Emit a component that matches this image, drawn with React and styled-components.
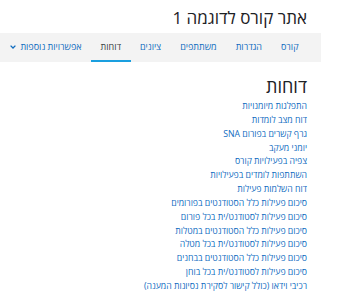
import React from 'react'
import styled, { createGlobalStyle } from 'styled-components'

const GlobalStyle = createGlobalStyle`
  body {
    margin: 0;
    background: #fff;
    font-family: 'Open Sans', 'Noto Sans', sans-serif;
  }
`

const tabs = [
  { name: 'קורס' },
  { name: 'הגדרות' },
  { name: 'משתתפים' },
  { name: 'ציונים' },
  { name: 'דוחות', active: true },
  { name: 'אפשרויות נוספות', more: true },
]

const reports = [
  'התפלגות מיומנויות',
  'דוח מצב לומדות',
  'גרף קשרים בפורום SNA',
  'יומני מעקב',
  'צפיה בפעילויות קורס',
  'השתתפות לומדים בפעילויות',
  'דוח השלמות פעילות',
  'סיכום פעילות כלל הסטודנטים בפורומים',
  'סיכום פעילות לסטודנט/ית בכל פורום',
  'סיכום פעילות כלל הסטודנטים במטלות',
  'סיכום פעילות לסטודנט/ית בכל מטלה',
  'סיכום פעילות כלל הסטודנטים בבחנים',
  'סיכום פעילות לסטודנט/ית בכל בוחן',
  'רכיבי וידאו (כולל קישור לסקירת נסיונות המענה)',
]

const App = () => {
  return (
    <Page>
      <GlobalStyle />
      <Title>אתר קורס לדוגמה 1</Title>
      <TabBar>
        {tabs.map(({ name, active, more }) => (
          <Tab key={name} $active={active}>
            {name}
            {more && (
              <svg width='6' height='4' viewBox='0 0 6 4'>
                <path d='M0.6 0.6 L3 3 L5.4 0.6' fill='none' stroke='#0f6cbf' strokeWidth='1.3' />
              </svg>
            )}
          </Tab>
        ))}
      </TabBar>
      <Content>
        <Heading>דוחות</Heading>
        <LinkList>
          {reports.map(r => (
            <Item key={r}>
              <a href='#'>{r}</a>
            </Item>
          ))}
        </LinkList>
      </Content>
    </Page>
  )
}

const Page = styled.div`
  direction: rtl;
  width: 340px;
  height: 295px;
  overflow: hidden;
  padding-right: 19px;
  box-sizing: border-box;
`

const Title = styled.h1`
  margin: 0;
  padding: 6px 14px 0 0;
  height: 27px;
  font-size: 17px;
  font-weight: 400;
  line-height: 24px;
  color: #1d2125;
`

const TabBar = styled.nav`
  display: flex;
  align-items: stretch;
  height: 29px;
  background: #f3f3f3;
  padding-right: 13px;
`

const Tab = styled.div`
  display: flex;
  align-items: center;
  gap: 4px;
  padding: 0 9.5px;
  font-size: 9px;
  color: ${p => (p.$active ? '#3a3f44' : '#0f6cbf')};
  border-bottom: 2px solid ${p => (p.$active ? '#1a9fdf' : 'transparent')};
  white-space: nowrap;
`

const Content = styled.div`
  padding: 12px 14px 0 0;
`

const Heading = styled.h2`
  margin: 0 0 2px;
  font-size: 18px;
  font-weight: 400;
  line-height: 24px;
  color: #1d2125;
`

const LinkList = styled.ul`
  list-style: none;
  margin: 0;
  padding: 0;
`

const Item = styled.li`
  font-size: 8.7px;
  line-height: 13.85px;

  a {
    color: #0f6cbf;
    text-decoration: none;
  }
`

export default App
